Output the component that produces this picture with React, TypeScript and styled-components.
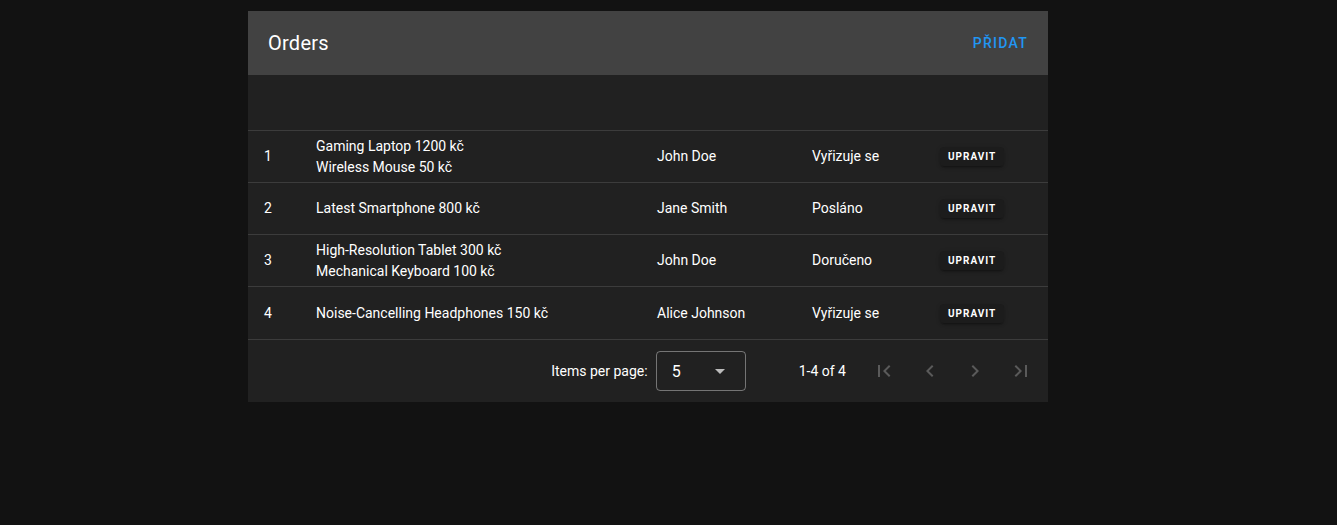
import React from "react";
import styled, { createGlobalStyle } from "styled-components";

type Order = {
  id: number;
  items: string[];
  customer: string;
  status: string;
};

const ORDERS: Order[] = [
  {
    id: 1,
    items: ["Gaming Laptop 1200 kč", "Wireless Mouse 50 kč"],
    customer: "John Doe",
    status: "Vyřizuje se",
  },
  {
    id: 2,
    items: ["Latest Smartphone 800 kč"],
    customer: "Jane Smith",
    status: "Posláno",
  },
  {
    id: 3,
    items: ["High-Resolution Tablet 300 kč", "Mechanical Keyboard 100 kč"],
    customer: "John Doe",
    status: "Doručeno",
  },
  {
    id: 4,
    items: ["Noise-Cancelling Headphones 150 kč"],
    customer: "Alice Johnson",
    status: "Vyřizuje se",
  },
];

const ICONS = {
  first: "M18.41,16.59L13.82,12L18.41,7.41L17,6L11,12L17,18L18.41,16.59M6,6H8V18H6V6Z",
  prev: "M15.41,16.58L10.83,12L15.41,7.41L14,6L8,12L14,18L15.41,16.58Z",
  next: "M8.59,16.58L13.17,12L8.59,7.41L10,6L16,12L10,18L8.59,16.58Z",
  last: "M5.59,7.41L10.18,12L5.59,16.59L7,18L13,12L7,6L5.59,7.41M16,6H18V18H16V6Z",
  menuDown: "M7,10L12,15L17,10H7Z",
};

const Icon: React.FC<{ path: string; size?: number }> = ({ path, size = 24 }) => (
  <svg width={size} height={size} viewBox="0 0 24 24" fill="currentColor">
    <path d={path} />
  </svg>
);

const App: React.FC = () => {
  return (
    <>
      <GlobalStyle />
      <Page>
        <Card>
          <Toolbar>
            <Title>Orders</Title>
            <TextButton>Přidat</TextButton>
          </Toolbar>
          <Table>
            <HeaderRow />
            {ORDERS.map(({ id, items, customer, status }) => (
              <Row key={id}>
                <Cell>{id}</Cell>
                <Cell>
                  {items.map((item) => (
                    <Line key={item}>{item}</Line>
                  ))}
                </Cell>
                <Cell>{customer}</Cell>
                <Cell>{status}</Cell>
                <Cell>
                  <EditButton>Upravit</EditButton>
                </Cell>
              </Row>
            ))}
          </Table>
          <Footer>
            <FooterLabel>Items per page:</FooterLabel>
            <Select>
              <SelectValue>5</SelectValue>
              <Caret>
                <Icon path={ICONS.menuDown} />
              </Caret>
            </Select>
            <PageInfo>1-4 of 4</PageInfo>
            <Pager>
              <PagerButton disabled>
                <Icon path={ICONS.first} />
              </PagerButton>
              <PagerButton disabled>
                <Icon path={ICONS.prev} />
              </PagerButton>
              <PagerButton disabled>
                <Icon path={ICONS.next} />
              </PagerButton>
              <PagerButton disabled>
                <Icon path={ICONS.last} />
              </PagerButton>
            </Pager>
          </Footer>
        </Card>
      </Page>
    </>
  );
};

const GlobalStyle = createGlobalStyle`
  html, body {
    margin: 0;
    background: #121212;
    font-family: Roboto, "Liberation Sans", sans-serif;
    color: #ffffff;
  }
`;

const Page = styled.div`
  min-height: 525px;
  padding: 11px 0 0 248px;
  box-sizing: border-box;
`;

const Card = styled.div`
  width: 800px;
  background: #212121;
  overflow: hidden;
`;

const Toolbar = styled.div`
  display: flex;
  align-items: center;
  justify-content: space-between;
  height: 64px;
  padding: 0 4px 0 20px;
  background: #424242;
`;

const Title = styled.div`
  font-size: 20px;
  font-weight: 400;
  letter-spacing: 0.0125em;
`;

const TextButton = styled.button`
  height: 36px;
  padding: 0 16px;
  border: 0;
  background: transparent;
  color: #2196f3;
  font-family: inherit;
  font-size: 14px;
  font-weight: 500;
  letter-spacing: 0.0892em;
  text-transform: uppercase;
  cursor: pointer;
`;

const Table = styled.div`
  display: flex;
  flex-direction: column;
`;

const HeaderRow = styled.div`
  height: 55px;
  border-bottom: 1px solid rgba(255, 255, 255, 0.12);
`;

const Row = styled.div`
  display: grid;
  grid-template-columns: 52px 341px 155px 128px 1fr;
  min-height: 51px;
  border-bottom: 1px solid rgba(255, 255, 255, 0.12);

  &:last-child {
    min-height: 52px;
  }
`;

const Cell = styled.div`
  display: flex;
  flex-direction: column;
  justify-content: center;
  align-items: flex-start;
  padding: 0 16px;
  font-size: 14px;
  line-height: 21px;
  color: #ffffff;
`;

const Line = styled.div`
  white-space: nowrap;
`;

const EditButton = styled.button`
  height: 19px;
  min-width: 36px;
  padding: 0 8px;
  border: 0;
  border-radius: 4px;
  background: #1c1c1c;
  color: #ffffff;
  font-family: inherit;
  font-size: 10px;
  font-weight: 700;
  letter-spacing: 0.1em;
  text-transform: uppercase;
  box-shadow: 0 3px 1px -2px rgba(0, 0, 0, 0.2), 0 2px 2px 0 rgba(0, 0, 0, 0.14),
    0 1px 5px 0 rgba(0, 0, 0, 0.12);
  cursor: pointer;
`;

const Footer = styled.div`
  display: flex;
  align-items: center;
  justify-content: flex-end;
  height: 62px;
  padding: 0 6px 0 16px;
  font-size: 14px;
`;

const FooterLabel = styled.span`
  margin-right: 8px;
`;

const Select = styled.div`
  display: flex;
  align-items: center;
  justify-content: space-between;
  box-sizing: border-box;
  width: 90px;
  height: 40px;
  padding: 0 13px 0 15px;
  border: 1px solid rgba(255, 255, 255, 0.38);
  border-radius: 4px;
`;

const SelectValue = styled.span`
  font-size: 16px;
`;

const Caret = styled.span`
  display: flex;
  color: rgba(255, 255, 255, 0.7);
`;

const PageInfo = styled.span`
  margin: 0 17px 0 53px;
`;

const Pager = styled.div`
  display: flex;
  gap: 3.7px;
`;

const PagerButton = styled.button`
  display: flex;
  align-items: center;
  justify-content: center;
  width: 42px;
  height: 40px;
  padding: 0;
  border: 0;
  background: transparent;
  color: ${({ disabled }) => (disabled ? "rgba(255, 255, 255, 0.26)" : "#ffffff")};
`;

export default App;
